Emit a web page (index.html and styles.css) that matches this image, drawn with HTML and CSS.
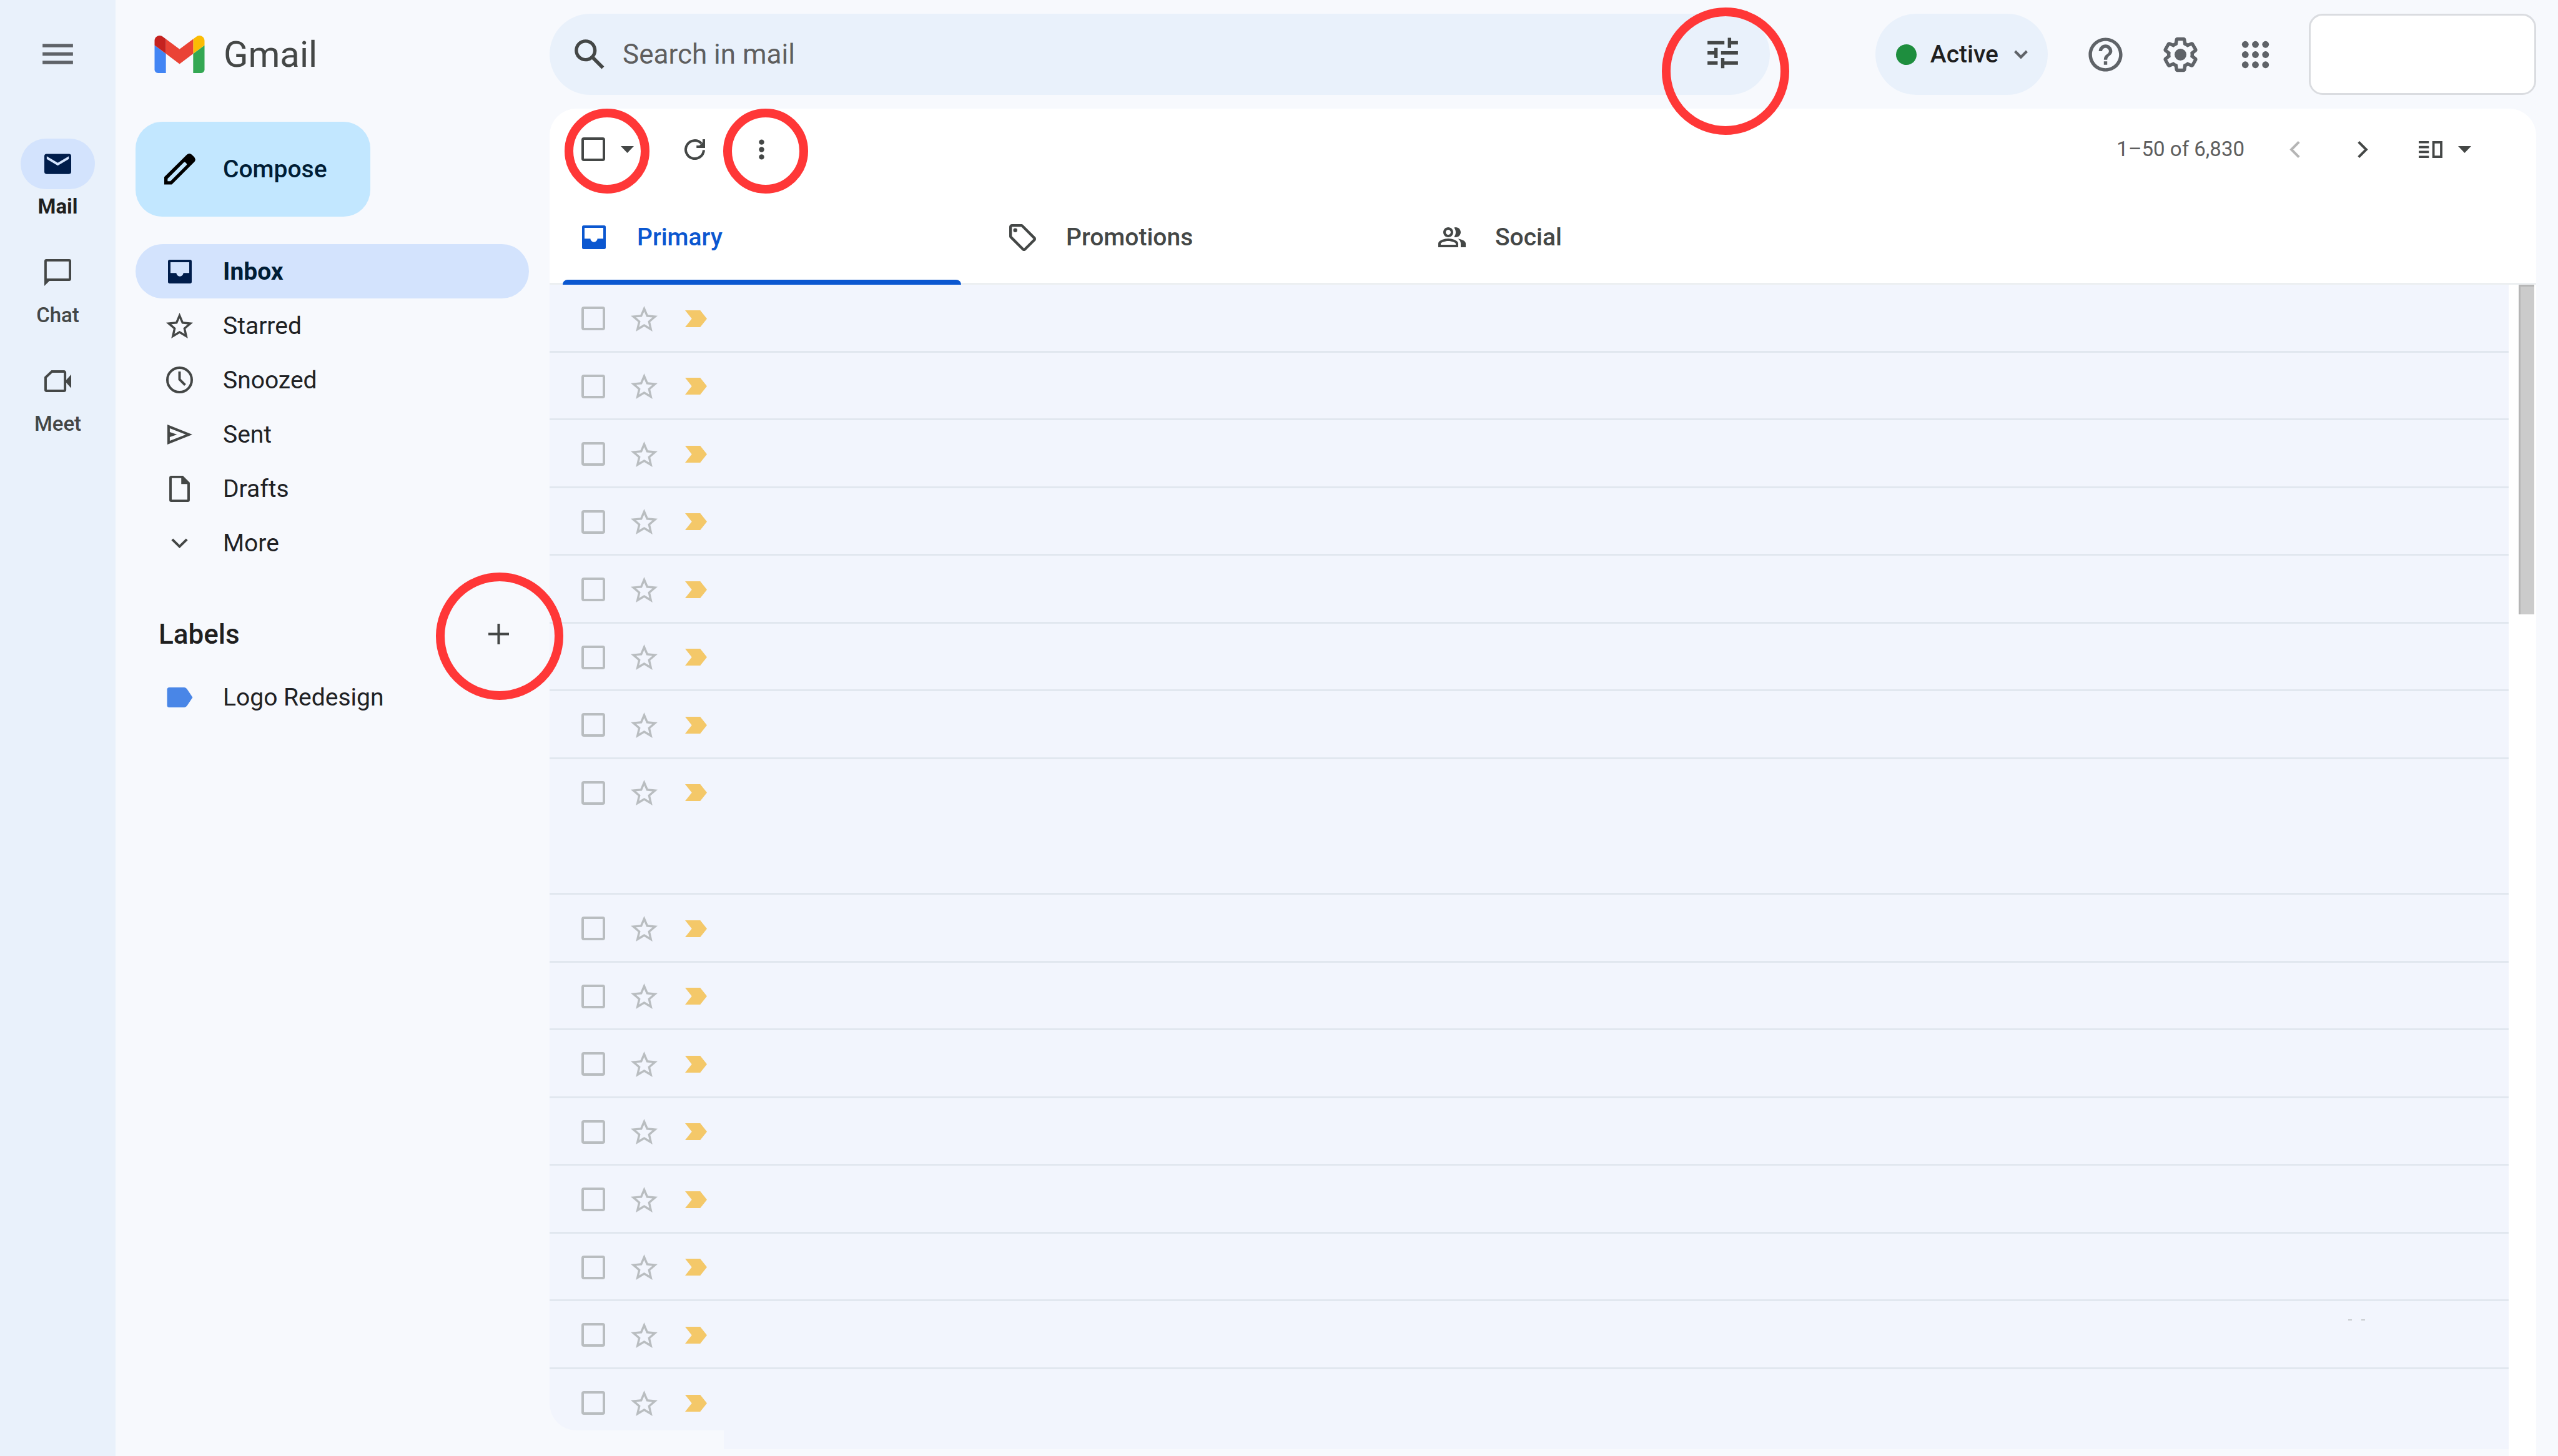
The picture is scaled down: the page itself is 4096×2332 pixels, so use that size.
FILE: index.html
```
<!DOCTYPE html>
<html lang="en">
<head>
<meta charset="utf-8">
<meta name="viewport" content="width=device-width, initial-scale=1">
<title>Inbox - Gmail</title>
<link rel="stylesheet" href="styles.css">
</head>
<body>
<svg class="sprite" aria-hidden="true">
  <symbol id="i-star" viewBox="2 2 20 19"><path d="M22 9.24l-7.19-.62L12 2 9.19 8.63 2 9.24l5.46 4.73L5.82 21 12 17.27 18.18 21l-1.63-7.03L22 9.24zM12 15.4l-3.76 2.27 1-4.28-3.32-2.88 4.38-.38L12 6.1l1.71 4.04 4.38.38-3.32 2.88 1 4.28L12 15.4z"/></symbol>
  <symbol id="i-important" viewBox="0 0 39 30"><path d="M0 0H27L39 15 27 30H0L12 15Z"/></symbol>
  <symbol id="i-inbox" viewBox="0 0 42 42"><path fill-rule="evenodd" d="M3 0H39a3 3 0 0 1 3 3V39a3 3 0 0 1-3 3H3a3 3 0 0 1-3-3V3a3 3 0 0 1 3-3ZM4.4 4.4V23.5H14.8a6.2 6 0 0 0 12.4 0H37.6V4.4Z"/></symbol>
  <symbol id="i-caret" viewBox="0 0 23 12"><path d="M0 0H23L11.5 12Z"/></symbol>
</svg>

<div class="app">
  <aside class="rail">
    <button class="icon-button menu" type="button" aria-label="Main menu">
      <svg class="i24" viewBox="0 0 24 24"><path d="M3 18h18v-2H3v2zm0-5h18v-2H3v2zm0-7v2h18V6H3z"/></svg>
    </button>
    <nav class="apps" aria-label="Apps">
      <a class="app-link current" href="#mail">
        <span class="app-icon"><svg width="43" height="33" viewBox="0 0 48 36"><rect width="48" height="36" rx="4"/><path class="cutout" d="M4.3 4.3 24 16 43.7 4.3V9.4L24 21.2 4.3 9.4Z"/></svg></span>
        <span class="app-name">Mail</span>
      </a>
      <a class="app-link" href="#chat">
        <span class="app-icon"><svg width="43" height="43" viewBox="0 0 48 48"><path fill-rule="evenodd" d="M3.500 0H44.500a3.500 3.500 0 0 1 3.500 3.500V35.500a3.500 3.500 0 0 1-3.500 3.500H9L0 48V3.500a3.500 3.500 0 0 1 3.500-3.500ZM4.300 4.300V34.700H43.700V4.300Z"/></svg></span>
        <span class="app-name">Chat</span>
      </a>
      <a class="app-link" href="#meet">
        <span class="app-icon"><svg width="43" height="35" viewBox="0 0 48 39"><path class="line" d="M13.500 2.200H35a2 2 0 0 1 2 2V34.800a2 2 0 0 1-2 2H4.200a2 2 0 0 1-2-2V13Z"/><path d="M48 7.500V32L37 19.700Z"/></svg></span>
        <span class="app-name">Meet</span>
      </a>
    </nav>
  </aside>

  <div class="workspace">
    <header class="topbar">
      <a class="brand" href="#inbox">
        <svg width="81" height="60" viewBox="52 42 88 66" aria-hidden="true"><path fill="#4285f4" d="M58 108h14V74L52 59v43c0 3.320 2.690 6 6 6"/><path fill="#34a853" d="M120 108h14c3.320 0 6-2.690 6-6V59l-20 15"/><path fill="#fbbc04" d="M120 48v26l20-15v-8c0-7.420-8.470-11.650-14.400-7.200"/><path fill="#ea4335" d="M72 74V48l24 18 24-18v26L96 92"/><path fill="#c5221f" d="M52 51v8l20 15V48l-5.600-4.200c-5.940-4.450-14.400-.22-14.400 7.200"/></svg>
        <span>Gmail</span>
      </a>
      <form class="search" role="search">
        <button class="icon-button dark" type="submit" aria-label="Search">
          <svg class="i24" viewBox="0 0 24 24"><path d="M20.49 19l-5.73-5.73C15.53 12.2 16 10.91 16 9.5A6.5 6.5 0 1 0 9.5 16c1.41 0 2.7-.47 3.77-1.24L19 20.49 20.49 19zM5 9.5C5 7.01 7.01 5 9.5 5S14 7.01 14 9.5 11.99 14 9.5 14 5 11.99 5 9.5z"/></svg>
        </button>
        <input class="search-field" type="text" placeholder="Search in mail" aria-label="Search in mail">
        <span class="marked">
          <button class="icon-button dark" type="button" aria-label="Show search options">
            <svg class="i24" viewBox="0 1 24 24"><path d="M3 17v2h6v-2H3zM3 5v2h10V5H3zm10 16v-2h8v-2h-8v-2h-2v6h2zM7 9v2H3v2h4v2h2V9H7zm14 4v-2H11v2h10zm-6-4h2V7h4V5h-4V3h-2v6z"/></svg>
          </button>
          <span class="ring ring-search"></span>
        </span>
      </form>
      <button class="status" type="button">
        <span class="status-dot"></span>
        <span>Active</span>
        <svg width="22" height="14" viewBox="0 0 22 14"><path class="line" d="M1.500 2 11 11.500 20.500 2"/></svg>
      </button>
      <div class="tools">
        <button class="tool" type="button" aria-label="Support"><svg class="i24" viewBox="0 0 24 24"><path d="M11 18h2v-2h-2v2zm1-16C6.480 2 2 6.480 2 12s4.480 10 10 10 10-4.480 10-10S17.520 2 12 2zm0 18c-4.410 0-8-3.590-8-8s3.590-8 8-8 8 3.590 8 8-3.590 8-8 8zm0-14c-2.210 0-4 1.790-4 4h2c0-1.100.9-2 2-2s2 .9 2 2c0 2-3 1.750-3 5h2c0-2.250 3-2.500 3-5 0-2.210-1.790-4-4-4z"/></svg></button>
        <button class="tool" type="button" aria-label="Settings"><svg class="i24" viewBox="0 0 24 24"><path d="M13.85 22.25h-3.7c-.74 0-1.36-.54-1.45-1.27l-.27-1.89c-.27-.14-.53-.29-.79-.46l-1.8.72c-.7.26-1.47-.03-1.81-.65L2.2 15.53c-.35-.66-.2-1.44.36-1.88l1.53-1.19c-.01-.15-.02-.3-.02-.46 0-.15.01-.31.02-.46l-1.52-1.19c-.59-.45-.74-1.26-.37-1.88l1.85-3.19c.34-.62 1.11-.9 1.79-.63l1.81.73c.26-.17.52-.32.78-.46l.27-1.91c.09-.7.71-1.25 1.44-1.25h3.7c.74 0 1.36.54 1.45 1.27l.27 1.89c.27.14.53.29.79.46l1.8-.72c.71-.26 1.48.03 1.82.65l1.84 3.18c.36.66.2 1.44-.36 1.88l-1.52 1.19c.01.15.02.3.02.46s-.01.31-.02.46l1.52 1.19c.56.45.72 1.23.37 1.86l-1.86 3.22c-.34.62-1.11.9-1.8.63l-1.8-.72c-.26.17-.52.32-.78.46l-.27 1.91c-.1.68-.72 1.22-1.46 1.22zm-3.23-2h2.76l.37-2.55.53-.22c.44-.18.88-.44 1.34-.78l.45-.34 2.38.96 1.38-2.4-2.03-1.58.07-.56c.03-.26.06-.51.06-.78s-.03-.53-.06-.78l-.07-.56 2.03-1.58-1.39-2.4-2.39.96-.45-.35c-.42-.32-.87-.58-1.33-.77l-.52-.22-.37-2.55h-2.76l-.37 2.55-.53.21c-.44.19-.88.44-1.34.79l-.45.33-2.38-.95-1.39 2.39 2.03 1.58-.07.56a7 7 0 0 0-.06.79c0 .26.02.53.06.78l.07.56-2.03 1.58 1.38 2.4 2.39-.96.45.35c.43.33.86.58 1.33.77l.53.22.38 2.55z"/><circle cx="12" cy="12" r="3.500"/></svg></button>
        <button class="tool" type="button" aria-label="Google apps"><svg class="i24" viewBox="0 0 24 24"><circle cx="6" cy="6" r="2"/><circle cx="12" cy="6" r="2"/><circle cx="18" cy="6" r="2"/><circle cx="6" cy="12" r="2"/><circle cx="12" cy="12" r="2"/><circle cx="18" cy="12" r="2"/><circle cx="6" cy="18" r="2"/><circle cx="12" cy="18" r="2"/><circle cx="18" cy="18" r="2"/></svg></button>
      </div>
      <div class="account"></div>
    </header>

    <div class="content">
      <aside class="sidebar">
        <button class="compose" type="button">
          <svg width="50" height="50" viewBox="0 0 56 56"><path fill-rule="evenodd" d="M0 42 40.500 2Q45-2 49.500 2L53.500 6Q58 11 53.500 15.500L13.500 55.500H0ZM6 45V49.600H11L40.600 20Q40 16 35.800 15.200Z"/></svg>
          <span>Compose</span>
        </button>
        <nav class="folders" aria-label="Folders">
          <a class="folder selected" href="#inbox"><span class="folder-icon"><svg width="38" height="38"><use href="#i-inbox"/></svg></span>Inbox</a>
          <a class="folder" href="#starred"><span class="folder-icon"><svg width="43" height="41"><use href="#i-star"/></svg></span>Starred</a>
          <a class="folder" href="#snoozed"><span class="folder-icon"><svg width="43" height="43" viewBox="0 0 48 48"><circle class="line" cx="24" cy="24" r="21.800"/><path class="line" d="M24 9V23L34 33"/></svg></span>Snoozed</a>
          <a class="folder" href="#sent"><span class="folder-icon"><svg width="40" height="32" viewBox="0 0 44 35"><path fill-rule="evenodd" d="M0 0 44 17.500 0 35ZM4.300 6.500V13L17 17.500 4.300 22V28.500L32.500 17.500Z"/></svg></span>Sent</a>
          <a class="folder" href="#drafts"><span class="folder-icon"><svg width="33" height="42" viewBox="0 0 36 46"><path fill-rule="evenodd" d="M3.500 0H24L36 12V42.500a3.500 3.500 0 0 1-3.500 3.500H3.500a3.500 3.500 0 0 1-3.500-3.500V3.500a3.500 3.500 0 0 1 3.500-3.500ZM4.300 4.200V41.800H31.700V14.400H21V4.200Z"/></svg></span>Drafts</a>
          <a class="folder" href="#more"><span class="folder-icon"><svg width="27" height="16" viewBox="0 0 30 18"><path class="line" d="M1.800 2 15 15 28.200 2"/></svg></span>More</a>
        </nav>
        <section class="labels">
          <div class="labels-head">
            <h2>Labels</h2>
            <span class="marked">
              <button class="icon-button dark" type="button" aria-label="Create new label"><svg width="33" height="33" viewBox="0 0 36 36"><path class="line" d="M18 0V36M0 18H36"/></svg></button>
              <span class="ring ring-label"></span>
            </span>
          </div>
          <a class="folder" href="#logo-redesign"><span class="folder-icon tag"><svg width="42" height="32" viewBox="0 0 46 36"><path d="M4 0H31Q34 0 36 3L46 18 36 33Q34 36 31 36H4Q0 36 0 32V4Q0 0 4 0Z"/></svg></span>Logo Redesign</a>
        </section>
      </aside>

      <main class="mail">
        <div class="toolbar">
          <span class="marked select-all">
            <input class="check check-dark" type="checkbox" aria-label="Select all">
            <button class="bare" type="button" aria-label="Select options"><svg width="21" height="11"><use href="#i-caret"/></svg></button>
            <span class="ring ring-small ring-select"></span>
          </span>
          <button class="icon-button dark refresh" type="button" aria-label="Refresh"><svg width="33" height="33" viewBox="0 0 36 36"><path class="line" d="M33.800 19A15.800 15.800 0 1 1 29.500 7.200"/><path d="M36 0V15.200H21V10.800H26.200L31.600 5.500V0Z"/></svg></button>
          <span class="marked">
            <button class="icon-button dark" type="button" aria-label="More options"><svg width="9" height="33" viewBox="0 0 10 36"><circle cx="5" cy="4.800" r="4.700"/><circle cx="5" cy="18" r="4.700"/><circle cx="5" cy="31.200" r="4.700"/></svg></button>
            <span class="ring ring-small ring-more"></span>
          </span>
          <span class="count">1–50 of 6,830</span>
          <button class="page-button" type="button" aria-label="Newer" disabled><svg width="17" height="27" viewBox="0 0 18 30"><path class="line" d="M16.500 1.500 3 15 16.500 28.500"/></svg></button>
          <button class="page-button" type="button" aria-label="Older"><svg width="17" height="27" viewBox="0 0 18 30"><path class="line" d="M1.500 1.500 15 15 1.500 28.500"/></svg></button>
          <button class="split" type="button" aria-label="Toggle split pane mode">
            <svg width="38" height="27" viewBox="0 0 42 30"><path fill-rule="evenodd" d="M0 0H18V4H0ZM0 8.700H18V12.700H0ZM0 17.300H18V21.300H0ZM0 26H18V30H0ZM24 0H42V30H24ZM28.200 4.200V25.800H37.800V4.200Z"/></svg>
            <svg width="21" height="11"><use href="#i-caret"/></svg>
          </button>
        </div>

        <nav class="tabs" aria-label="Categories">
          <a class="tab active" href="#primary"><span class="tab-icon"><svg width="38" height="38"><use href="#i-inbox"/></svg></span>Primary</a>
          <a class="tab" href="#promotions"><span class="tab-icon"><svg width="43" height="43" viewBox="2 2 20 20"><path d="M21.410 11.580l-9-9C12.050 2.220 11.550 2 11 2H4c-1.100 0-2 .9-2 2v7c0 .55.22 1.050.59 1.420l9 9c.36.36.86.58 1.410.58s1.050-.22 1.410-.59l7-7c.37-.36.59-.86.59-1.410s-.23-1.060-.59-1.420zM13 20.010L4 11V4h7v-.01l9 9-7 7.020z"/><circle cx="6.500" cy="6.500" r="1.500"/></svg></span>Promotions</a>
          <a class="tab" href="#social"><span class="tab-icon"><svg width="44" height="32" viewBox="1 4 22 16"><path d="M16.670 13.130C18.040 14.060 19 15.320 19 17v3h4v-3c0-2.180-3.570-3.470-6.330-3.870z"/><path d="M15 12c2.210 0 4-1.790 4-4s-1.790-4-4-4c-.47 0-.91.1-1.330.24C14.500 5.270 15 6.580 15 8s-.5 2.730-1.330 3.760c.42.14.86.24 1.330.24z"/><path d="M9 12c2.210 0 4-1.790 4-4s-1.790-4-4-4-4 1.790-4 4 1.790 4 4 4zm0-6c1.100 0 2 .9 2 2s-.9 2-2 2-2-.9-2-2 .9-2 2-2z"/><path d="M9 13c-2.670 0-8 1.340-8 4v3h16v-3c0-2.660-5.330-4-8-4zm6 5H3v-.99C3.200 16.290 6.300 15 9 15s5.800 1.280 6 2v1z"/></svg></span>Social</a>
        </nav>

        <div class="list-area">
          <div class="list-column">
            <ul class="list">
              <li class="row"><div class="cells"><input class="check" type="checkbox" aria-label="Select conversation 1"><button class="bare star" type="button" aria-label="Star"><svg width="43" height="41"><use href="#i-star"/></svg></button><svg class="important" width="35" height="27"><use href="#i-important"/></svg></div></li>
              <li class="row"><div class="cells"><input class="check" type="checkbox" aria-label="Select conversation 2"><button class="bare star" type="button" aria-label="Star"><svg width="43" height="41"><use href="#i-star"/></svg></button><svg class="important" width="35" height="27"><use href="#i-important"/></svg></div></li>
              <li class="row"><div class="cells"><input class="check" type="checkbox" aria-label="Select conversation 3"><button class="bare star" type="button" aria-label="Star"><svg width="43" height="41"><use href="#i-star"/></svg></button><svg class="important" width="35" height="27"><use href="#i-important"/></svg></div></li>
              <li class="row"><div class="cells"><input class="check" type="checkbox" aria-label="Select conversation 4"><button class="bare star" type="button" aria-label="Star"><svg width="43" height="41"><use href="#i-star"/></svg></button><svg class="important" width="35" height="27"><use href="#i-important"/></svg></div></li>
              <li class="row"><div class="cells"><input class="check" type="checkbox" aria-label="Select conversation 5"><button class="bare star" type="button" aria-label="Star"><svg width="43" height="41"><use href="#i-star"/></svg></button><svg class="important" width="35" height="27"><use href="#i-important"/></svg></div></li>
              <li class="row"><div class="cells"><input class="check" type="checkbox" aria-label="Select conversation 6"><button class="bare star" type="button" aria-label="Star"><svg width="43" height="41"><use href="#i-star"/></svg></button><svg class="important" width="35" height="27"><use href="#i-important"/></svg></div></li>
              <li class="row"><div class="cells"><input class="check" type="checkbox" aria-label="Select conversation 7"><button class="bare star" type="button" aria-label="Star"><svg width="43" height="41"><use href="#i-star"/></svg></button><svg class="important" width="35" height="27"><use href="#i-important"/></svg></div></li>
              <li class="row tall"><div class="cells"><input class="check" type="checkbox" aria-label="Select conversation 8"><button class="bare star" type="button" aria-label="Star"><svg width="43" height="41"><use href="#i-star"/></svg></button><svg class="important" width="35" height="27"><use href="#i-important"/></svg></div></li>
              <li class="row"><div class="cells"><input class="check" type="checkbox" aria-label="Select conversation 9"><button class="bare star" type="button" aria-label="Star"><svg width="43" height="41"><use href="#i-star"/></svg></button><svg class="important" width="35" height="27"><use href="#i-important"/></svg></div></li>
              <li class="row"><div class="cells"><input class="check" type="checkbox" aria-label="Select conversation 10"><button class="bare star" type="button" aria-label="Star"><svg width="43" height="41"><use href="#i-star"/></svg></button><svg class="important" width="35" height="27"><use href="#i-important"/></svg></div></li>
              <li class="row"><div class="cells"><input class="check" type="checkbox" aria-label="Select conversation 11"><button class="bare star" type="button" aria-label="Star"><svg width="43" height="41"><use href="#i-star"/></svg></button><svg class="important" width="35" height="27"><use href="#i-important"/></svg></div></li>
              <li class="row"><div class="cells"><input class="check" type="checkbox" aria-label="Select conversation 12"><button class="bare star" type="button" aria-label="Star"><svg width="43" height="41"><use href="#i-star"/></svg></button><svg class="important" width="35" height="27"><use href="#i-important"/></svg></div></li>
              <li class="row"><div class="cells"><input class="check" type="checkbox" aria-label="Select conversation 13"><button class="bare star" type="button" aria-label="Star"><svg width="43" height="41"><use href="#i-star"/></svg></button><svg class="important" width="35" height="27"><use href="#i-important"/></svg></div></li>
              <li class="row"><div class="cells"><input class="check" type="checkbox" aria-label="Select conversation 14"><button class="bare star" type="button" aria-label="Star"><svg width="43" height="41"><use href="#i-star"/></svg></button><svg class="important" width="35" height="27"><use href="#i-important"/></svg></div></li>
              <li class="row"><div class="cells"><input class="check" type="checkbox" aria-label="Select conversation 15"><button class="bare star" type="button" aria-label="Star"><svg width="43" height="41"><use href="#i-star"/></svg></button><svg class="important" width="35" height="27"><use href="#i-important"/></svg><svg class="ticks" width="27" height="3" viewBox="0 0 27 3"><path d="M0 1H6V3H0ZM21 1H27V3H21Z"/></svg></div></li>
              <li class="row last"><div class="cells"><input class="check" type="checkbox" aria-label="Select conversation 16"><button class="bare star" type="button" aria-label="Star"><svg width="43" height="41"><use href="#i-star"/></svg></button><svg class="important" width="35" height="27"><use href="#i-important"/></svg></div></li>
            </ul>
            <div class="list-tail"></div>
          </div>
          <div class="gutter"><div class="thumb"></div></div>
        </div>
      </main>
    </div>
  </div>
</div>
</body>
</html>
```
FILE: styles.css
```
* { box-sizing: border-box; }

body {
  margin: 0;
  background: #f7f9fd;
  color: #202124;
  font-family: Roboto, "Open Sans", sans-serif;
  font-size: 39px;
  line-height: 48px;
}

a { color: inherit; text-decoration: none; }

button {
  margin: 0;
  padding: 0;
  border: 0;
  background: none;
  color: inherit;
  font: inherit;
}

svg { display: block; flex: none; fill: currentColor; }
.line { fill: none; stroke: currentColor; stroke-width: 4.4; }
.sprite { position: absolute; width: 0; height: 0; }
.i24 { width: 65px; height: 65px; }

.app { display: flex; min-height: 100vh; }

/* App rail */
.rail {
  flex: none;
  width: 185px;
  background: #e9f1fb;
  color: #444746;
  display: flex;
  flex-direction: column;
  align-items: center;
}
.menu { margin: 54px 0 103px; color: #5f6368; }
.apps { width: 100%; }
.app-link { display: flex; flex-direction: column; align-items: center; gap: 8px; padding-bottom: 45px; }
.app-icon { width: 119px; height: 81px; border-radius: 41px; display: flex; align-items: center; justify-content: center; }
.app-name { font-size: 33px; line-height: 40px; font-weight: 500; }
.current .app-icon { background: #d3e3fd; color: #001d4b; }
.current .app-name { color: #1f1f1f; font-weight: 700; }
.cutout { fill: #d3e3fd; }

.icon-button { width: 65px; height: 65px; display: flex; align-items: center; justify-content: center; }
.dark { color: #444746; }
.bare { display: flex; }

/* Top bar */
.workspace { flex: 1; min-width: 0; display: flex; flex-direction: column; }
.topbar { display: flex; align-items: center; padding: 22px 35px 22px 0; }
.brand {
  flex: none;
  width: 695px;
  padding-left: 62px;
  display: flex;
  align-items: center;
  gap: 30px;
  color: #444746;
  font-size: 58px;
  line-height: 70px;
}
.search {
  flex: 0 1 1954px;
  min-width: 0;
  height: 130px;
  padding: 0 43px 0 32px;
  border-radius: 65px;
  background: #e9f1fb;
  display: flex;
  align-items: center;
}
.search-field {
  flex: 1;
  min-width: 0;
  margin: 0 20px;
  padding: 0;
  border: 0;
  outline: 0;
  background: none;
  color: #202124;
  font: 400 44px/56px Roboto, "Open Sans", sans-serif;
}
.search-field::placeholder { color: #5e5e5e; opacity: 1; }
.status {
  flex: none;
  height: 130px;
  margin-left: auto;
  padding: 0 32px 0 33px;
  border-radius: 65px;
  background: #e9f1fb;
  color: #1f1f1f;
  font-weight: 500;
  display: flex;
  align-items: center;
}
.status svg { margin-left: 25px; color: #5f6368; }
.status-dot { width: 33px; height: 33px; margin-right: 22px; border-radius: 50%; background: #1e8e3e; }
.tools { display: flex; margin: 0 26px 0 32px; color: #5f6368; }
.tool { width: 120px; height: 65px; display: flex; justify-content: center; }
.account { flex: none; width: 364px; height: 130px; border: 3px solid #dadce0; border-radius: 22px; background: #fff; }

/* Sidebar */
.content { flex: 1; display: flex; }
.sidebar { flex: none; width: 695px; padding: 21px 33px 0 32px; }
.compose {
  height: 152px;
  width: 376px;
  padding-left: 46px;
  border-radius: 43px;
  background: #c2e7ff;
  color: #001d35;
  font-weight: 500;
  display: flex;
  align-items: center;
  gap: 44px;
}
.compose svg { color: #000; }
.folders { margin-top: 44px; }
.folder { height: 87px; padding-left: 38px; border-radius: 44px; display: flex; align-items: center; gap: 37px; }
.folder-icon { width: 65px; display: flex; justify-content: center; color: #444746; }
.selected { background: #d3e3fd; color: #001d35; font-weight: 700; }
.selected .folder-icon { color: #001d4b; }
.tag { color: #4986e7; }
.labels { margin-top: 59px; }
.labels-head { height: 87px; margin-bottom: 14px; padding: 0 16px 0 37px; display: flex; align-items: center; justify-content: space-between; }
.labels-head h2 { margin: 0; color: #1f1f1f; font-size: 44px; line-height: 56px; font-weight: 500; }

/* Hand-drawn style rings round a control */
.marked { position: relative; }
.ring { position: absolute; z-index: 1; width: 204px; height: 204px; border: 14px solid #ff3737; border-radius: 50%; pointer-events: none; }
.ring-small { width: 136px; height: 136px; }
.ring-search { left: -65px; top: -43px; }
.ring-label { left: -68px; top: -66px; }
.ring-select { left: -27px; top: -46px; }
.ring-more { left: -29px; top: -33px; }

/* Mail pane */
.mail { flex: 1; min-width: 0; margin-right: 35px; display: flex; flex-direction: column; }
.toolbar { height: 130px; padding: 0 104px 0 51px; border-radius: 43px 43px 0 0; background: #fff; color: #444746; display: flex; align-items: center; }
.select-all { display: flex; align-items: center; gap: 25px; }
.check { appearance: none; flex: none; width: 38px; height: 38px; margin: 0; border: 4px solid #b9bdc0; border-radius: 4px; }
.check-dark { border-color: #444746; }
.refresh { margin: 0 42px 0 65px; }
.count { margin: 0 26px 0 auto; color: #5e5e5e; font-size: 33px; line-height: 40px; }
.page-button { width: 109px; height: 65px; display: flex; align-items: center; justify-content: center; }
.page-button:disabled { color: #b5b5b5; }
.split { margin-left: 35px; display: flex; align-items: center; gap: 25px; }

.tabs { height: 152px; border-bottom: 3px solid #eceff1; background: #fff; color: #444746; font-weight: 500; display: flex; }
.tab { position: relative; flex: 0 1 687px; height: 152px; padding-left: 38px; display: flex; align-items: center; gap: 37px; }
.tab-icon { width: 65px; display: flex; justify-content: center; }
.active { color: #0b57d0; }
.active::after { content: ""; position: absolute; left: 21px; right: 28px; bottom: 0; height: 8px; border-radius: 8px 8px 0 0; background: #0b57d0; }

.list-area { flex: 1; display: flex; }
.list-column { flex: 1; min-width: 0; display: flex; flex-direction: column; padding-bottom: 11px; }
.list { flex: 1; margin: 0; padding: 0; list-style: none; display: flex; flex-direction: column; }
.row { flex: 1 0 0; background: #f2f5fd; box-shadow: inset 0 -3px #e1e7ef; }
.tall { flex-grow: 2; }
.last { flex: none; height: 98px; border-bottom-left-radius: 43px; box-shadow: none; }
.cells { position: relative; height: 108px; padding-left: 51px; display: flex; align-items: center; }
.star { margin: 0 44px 0 41px; color: #b9bdc0; }
.important { color: #f4c869; }
.ticks { position: absolute; right: 230px; top: 28px; color: #c9cccf; }
.list-tail { height: 30px; margin-left: 279px; background: #f2f5fd; }
.gutter { flex: none; width: 44px; padding: 0 3px 0 16px; background: #fff; }
.thumb { height: 528px; border: solid #b5b5b5; border-width: 3px 0 0 3px; background: #cbcbcb; }
```
